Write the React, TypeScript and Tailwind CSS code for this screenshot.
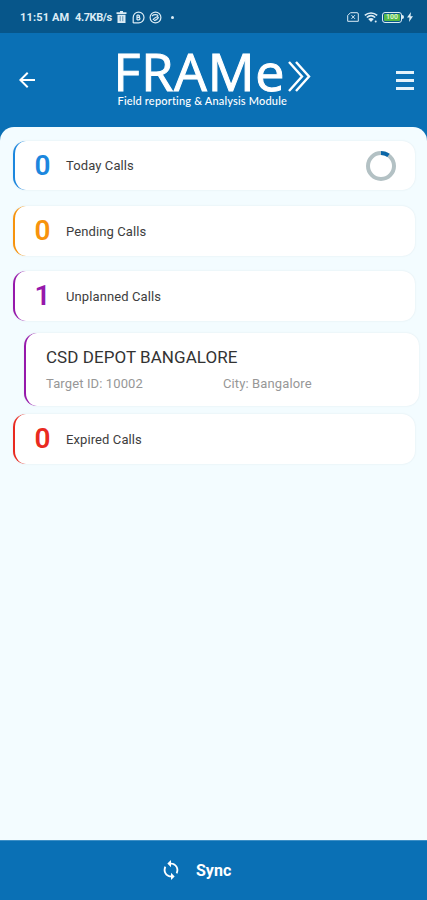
import { MdArrowBack, MdSync } from 'react-icons/md';
import clsx from 'clsx';

function StatusBar() {
  return (
    <div className="flex h-[33px] items-center justify-between bg-[#07568a] pt-px pl-5 pr-[14px] text-[#dcecf5]">
      <div className="flex items-center text-[11px] font-bold leading-none">
        <span className="w-[51px] whitespace-nowrap tracking-[0.15px]">11:51 AM</span>
        <span className="ml-1 w-[39px] whitespace-nowrap tracking-[-0.4px]">4.7KB/s</span>
        <svg className="ml-[2px] h-[12px] w-[11px]" viewBox="0 0 11 12" fill="currentColor">
          <path d="M4 0 H7 V1.2 H10.5 V3 H.5 V1.2 H4 Z M1.5 3.8 H9.5 V12 H1.5 Z" />
          <path d="M4.2 5.2 V10.2 M6.8 5.2 V10.2" stroke="#07568a" strokeWidth=".6" />
        </svg>
        <svg className="ml-[5px] size-[13px]" viewBox="0 0 13 13" fill="none" stroke="currentColor" strokeWidth="1.2">
          <path d="M1.2 12 V6.5 A5.4 5.4 0 1 1 6.6 11.9 H1.2" />
          <path d="M5 4 v5 M5 4.1 h1.4 a1.1 1.1 0 0 1 0 2.2 H5 h1.7 a1.2 1.2 0 0 1 0 2.5 H5" />
        </svg>
        <svg className="ml-[4px] size-[13px]" viewBox="0 0 13 13" fill="none" stroke="currentColor" strokeWidth="1.2">
          <circle cx="6.5" cy="6.5" r="5.4" />
          <path d="M3 5 C5 3 9 3.5 9 5 C9 6 5 6 4 9 M5 9.5 C8 9 9 7.5 9.5 6" />
        </svg>
        <span className="ml-[9px] size-[3px] rounded-full bg-current" />
      </div>

      <div className="flex items-center">
        <svg className="h-[10px] w-[12px]" viewBox="0 0 12 10" fill="none" stroke="currentColor">
          <path d="M3.5 .7 H10 a1.3 1.3 0 0 1 1.3 1.3 V9.3 H.7 V3.5 Z" />
          <path d="M4.5 3.2 l3.4 3.6 M7.9 3.2 l-3.4 3.6" />
        </svg>
        <svg className="ml-[5px] h-[11px] w-[14px]" viewBox="0 0 14 11" fill="none" stroke="currentColor" strokeWidth="1.6">
          <path d="M.8 3.4 C4.5 .1 9.5 .1 13.2 3.4" />
          <path d="M2.8 5.5 C5.3 3.3 8.7 3.3 11.2 5.5" />
          <path d="M4.2 7 L7 10 L9.8 7 C8 5.6 6 5.6 4.2 7" fill="currentColor" stroke="none" />
          <circle cx="11.7" cy="9.5" r="1" fill="currentColor" stroke="none" />
        </svg>
        <div className="ml-[4px] flex h-[11px] w-[20px] items-center justify-center rounded-[3px] border border-[#dcecf5] p-px">
          <div className="flex h-full w-full items-center justify-center rounded-[1px] bg-[#55b847] text-[7px] font-bold leading-none text-[#d8f5cf]">
            100
          </div>
        </div>
        <span className="h-[4px] w-[2px] rounded-r bg-[#dcecf5]" />
        <svg className="ml-[3px] h-[10px] w-[6px]" viewBox="0 0 6 10" fill="currentColor">
          <path d="M4 0 L0 5.6 H2.5 L2 10 L6 4.2 H3.5 Z" />
        </svg>
      </div>
    </div>
  );
}

function Logo() {
  return (
    <div className="mr-[6px] flex w-[194px] flex-col pt-[13px] text-white">
      <div className="flex h-[48px] items-start">
        <span className="-mt-[2px] -ml-[4px] w-[174px] whitespace-nowrap font-['Open_Sans',sans-serif] text-[52px] leading-[53px] tracking-[0.8px] [-webkit-text-stroke:1px_white]">
          FRAMe
        </span>
        <svg className="mt-[15px] h-[31px] w-[23px] shrink-0" viewBox="0 0 23 31" fill="none" stroke="currentColor" strokeWidth="2.4">
          <path d="M1 1 L14 15.5 L1 30" />
          <path d="M8 1 L21 15.5 L8 30" />
        </svg>
      </div>
      <span className="whitespace-nowrap font-['Lato',sans-serif] text-[11px] font-medium leading-[13px] tracking-[0.18px]">
        Field reporting &amp; Analysis Module
      </span>
    </div>
  );
}

function Header() {
  return (
    <header className="flex h-[94px] items-start justify-between bg-[#0a70b5] pl-[15px] pr-[13px]">
      <MdArrowBack className="mt-[35px] size-6 text-white" />
      <Logo />
      <button className="mt-[38px] flex w-[18px] flex-col gap-[5px]">
        <span className="h-[3px] bg-[#e4f2fa]" />
        <span className="h-[3px] bg-[#e4f2fa]" />
        <span className="h-[3px] bg-[#e4f2fa]" />
      </button>
    </header>
  );
}

function ProgressRing() {
  return (
    <svg className="size-[32px]" viewBox="0 0 32 32" fill="none" strokeWidth="4">
      <circle cx="16" cy="16" r="13" stroke="#b3c1c4" />
      <path d="M16 3 A13 13 0 0 1 23.5 5.4" stroke="#0a66a8" />
    </svg>
  );
}

type CallRowProps = {
  count: number;
  label: string;
  border: string;
  color: string;
  className?: string;
  loading?: boolean;
};

function CallRow({ count, label, border, color, className, loading }: CallRowProps) {
  return (
    <div
      className={clsx(
        'mr-3 ml-[13px] flex items-center rounded-[13px] border-l-[2.5px] bg-white pr-[18px] shadow-[0_0_2px_rgba(90,110,130,0.14)]',
        border,
        className,
      )}
    >
      <span className={clsx('ml-[19.5px] w-4 text-center text-[28px] font-semibold leading-none', color)}>{count}</span>
      <span className="ml-[15.5px] grow pt-px text-[13px] tracking-[0.1px] text-[#3d3d3d]">{label}</span>
      {loading && <ProgressRing />}
    </div>
  );
}

export default function App() {
  return (
    <div className="flex h-[900px] w-[427px] flex-col overflow-hidden bg-[#0a70b5] font-['Roboto',sans-serif]">
      <StatusBar />
      <Header />

      <main className="grow rounded-t-[14px] bg-[#f3fcff] pt-[14px]">
        <CallRow count={0} label="Today Calls" border="border-[#1c87de]" color="text-[#1c87de]" className="h-[49px]" loading />
        <CallRow count={0} label="Pending Calls" border="border-[#f7930d]" color="text-[#f7930d]" className="mt-4 h-[50px]" />
        <CallRow count={1} label="Unplanned Calls" border="border-[#9619ab]" color="text-[#9619ab]" className="mt-[15px] h-[50px]" />

        {/* Unplanned call details */}
        <div className="mt-3 mr-2 ml-[24px] h-[73px] rounded-[13px] border-l-[2.5px] border-[#9619ab] bg-white pt-[14px] pl-[20px] shadow-[0_0_2px_rgba(90,110,130,0.14)]">
          <div className="text-[17px] leading-5 tracking-[0.05px] text-[#333333]">CSD DEPOT BANGALORE</div>
          <div className="mt-[9px] flex text-[13px] leading-4 tracking-[0.12px] text-[#979797]">
            <span className="w-[177px]">Target ID: 10002</span>
            <span>City: Bangalore</span>
          </div>
        </div>

        <CallRow count={0} label="Expired Calls" border="border-[#e92a20]" color="text-[#e92a20]" className="mt-2 h-[50px]" />
      </main>

      <footer className="flex h-[60px] items-center border-t border-[#3d8fc6] bg-[#0a70b5] pl-[160px] text-white">
        <MdSync className="size-[22px] -translate-y-px" />
        <span className="ml-[14px] text-[16px] font-bold">Sync</span>
      </footer>
    </div>
  );
}
